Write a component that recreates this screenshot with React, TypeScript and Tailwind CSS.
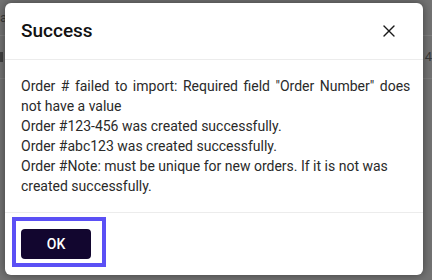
import { X } from "lucide-react";

const messages = [
  "Order #123-456 was created successfully.",
  "Order #abc123 was created successfully.",
  "Order #Note: must be unique for new orders. If it is not was created successfully.",
];

function Backdrop() {
  // faded page content behind the overlay, laid out as rows
  return (
    <div className="absolute inset-0 flex flex-col bg-[#737373] text-[13px] leading-4 text-[#3a3a3a]">
      <div className="flex h-[36px] items-center justify-between border-b border-[#808080]">
        <span>a</span>
      </div>
      <div className="flex h-[43px] items-center justify-between border-b border-[#7d7d7d]">
        <span className="h-[10px] w-[3px] bg-[#404040]" />
        <span>4</span>
      </div>
    </div>
  );
}

export default function App() {
  return (
    <div
      className="relative h-[280px] w-[432px] overflow-hidden"
      style={{ fontFamily: "Roboto, 'Noto Sans', sans-serif" }}
    >
      <Backdrop />
      <div className="relative flex pl-[5px] pt-[3px]">
        <div className="w-[418px] rounded-md bg-white shadow-[0_0_10px_rgba(0,0,0,0.45)]">
          <header className="flex items-center justify-between border-b border-[#ececec] px-4 py-4">
            <h1 className="text-[19px] leading-6 font-medium text-[#111111]">Success</h1>
            <button className="mr-[8px] flex h-5 w-5 items-center justify-center text-[#1a1a1a]">
              <X size={20} strokeWidth={1.6} />
            </button>
          </header>
          <div className="p-4 text-[14px] leading-5 text-[#2a2a2a]">
            <p>
              <span className="whitespace-nowrap [word-spacing:2px]">
                Order # failed to import: Required field "Order Number" does
              </span>
              <br />
              not have a value
            </p>
            {messages.map((m) => (
              <p key={m}>{m}</p>
            ))}
          </div>
          <footer className="relative border-t border-[#ececec] p-4">
            <button className="h-[30px] w-[70px] rounded-[4px] bg-[#12062f] text-[14px] font-medium text-white">
              OK
            </button>
            <div className="absolute left-[7px] top-[4px] h-[50px] w-[94px] border-4 border-[#5b50f5]" />
          </footer>
        </div>
      </div>
    </div>
  );
}
